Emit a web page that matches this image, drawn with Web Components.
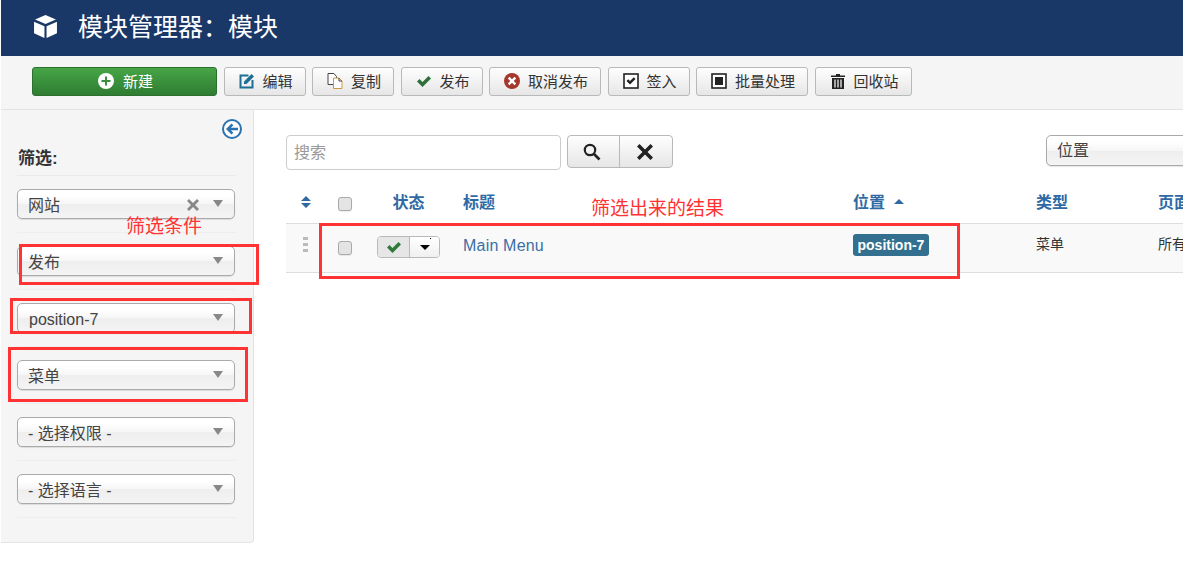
<!DOCTYPE html>
<html lang="zh-CN">

<head>
    <meta charset="UTF-8">
    <title>模块管理器:模块</title>
    <style>
        html, body {
            margin: 0;
            height: 100%;
            background: #fff;
            overflow: hidden;
        }

        body {
            position: relative;
            padding-left: 1px;
            box-sizing: border-box;
            font: 16px "Liberation Sans", "Noto Sans CJK SC", sans-serif;
            color: #333;
        }

        .content {
            display: flex;
            align-items: flex-start;
        }
    </style>
</head>

<body>
    <title-bar>模块管理器&#xFF1A;模块</title-bar>

    <tool-bar>
        <tool-button kind="new" icon="plus">新建</tool-button>
        <tool-button icon="edit">编辑</tool-button>
        <tool-button icon="copy">复制</tool-button>
        <tool-button icon="check">发布</tool-button>
        <tool-button icon="cancel">取消发布</tool-button>
        <tool-button icon="checkin">签入</tool-button>
        <tool-button icon="batch">批量处理</tool-button>
        <tool-button icon="trash">回收站</tool-button>
    </tool-bar>

    <div class="content">
        <filter-sidebar>
            <filter-select clearable>网站</filter-select>
            <filter-select>发布</filter-select>
            <filter-select latin>position-7</filter-select>
            <filter-select>菜单</filter-select>
            <filter-select>- 选择权限 -</filter-select>
            <filter-select>- 选择语言 -</filter-select>
        </filter-sidebar>
        <module-list></module-list>
    </div>

    <!-- 红色标注 -->
    <note-box x="19" y="244" w="240" h="41"></note-box>
    <note-box x="10" y="298" w="242" h="36"></note-box>
    <note-box x="8" y="347" w="240" h="55"></note-box>
    <note-box x="319" y="223" w="641" h="56"></note-box>
    <note-text x="126" y="215">筛选条件</note-text>
    <note-text x="591" y="197">筛选出来的结果</note-text>

    <script>
        const ICONS = {
            plus: '<svg width="16" height="16" viewBox="0 0 16 16"><circle cx="8" cy="8" r="8" fill="#fff"/><path d="M7 3.500h2V7h3.500v2H9v3.500H7V9H3.500V7H7z" fill="#3a8f3c"/></svg>',
            edit: '<svg width="16" height="16" viewBox="0 0 16 16"><path d="M9.500 2.500H1.500v12h12V7" fill="none" stroke="#1f6f94" stroke-width="2"/><path d="M5 8.500 12.500 1 15 3.500 7.500 11H5z" fill="#1f6f94"/></svg>',
            copy: '<svg width="16" height="16" viewBox="0 0 16 16"><path d="M1 .5h6l2.500 3v8H1z" fill="#fff" stroke="#444"/><path d="M6.500 5h5.500l3 3v7.500H6.500z" fill="#fff" stroke="#c79a3c"/><path d="M12 5v3h3" fill="none" stroke="#444"/></svg>',
            check: '<svg width="16" height="16" viewBox="0 0 16 16"><path d="M1 8.500 3.500 6l3 3L12.500 3 15 5.500 6.500 14z" fill="#2f6f3a"/></svg>',
            cancel: '<svg width="16" height="16" viewBox="0 0 16 16"><circle cx="8" cy="8" r="8" fill="#a5372c"/><path d="M5.500 3.800 8 6.300l2.500-2.500 1.700 1.700L9.700 8l2.500 2.500-1.700 1.700L8 9.700l-2.500 2.500-1.700-1.700L6.300 8 3.800 5.500z" fill="#fff"/></svg>',
            checkin: '<svg width="16" height="16" viewBox="0 0 16 16"><rect x="1" y="1" width="14" height="14" fill="#fff" stroke="#222" stroke-width="1.600"/><path d="M3.500 8 5.200 6.300 7 8l3.800-3.800 1.700 1.700L7 11.400z" fill="#222"/></svg>',
            batch: '<svg width="16" height="16" viewBox="0 0 16 16"><rect x="1" y="1" width="14" height="14" fill="#fff" stroke="#222" stroke-width="1.600"/><rect x="4" y="4" width="8" height="8" fill="#222"/></svg>',
            trash: '<svg width="16" height="16" viewBox="0 0 16 16"><path d="M1 2.500h5V1h4v1.500h5V4H1zM2 5h12v11H2z" fill="#222"/><path d="M5 6.500v8M8 6.500v8M11 6.500v8" stroke="#fff" stroke-width="1.200"/></svg>'
        };

        class TitleBar extends HTMLElement {
            constructor() {
                super();
                this.attachShadow({ mode: 'open' }).innerHTML = `
                    <style>
                        :host {
                            display: flex;
                            align-items: center;
                            height: 56px;
                            padding-left: 32px;
                            gap: 20px;
                            background: #1a3867;
                            color: #fff;
                            font-size: 25px;
                        }
                        svg { display: block; margin-top: -3px; }
                        span { margin-top: -6px; }
                    </style>
                    <svg width="25" height="25" viewBox="0 0 24 24" fill="#fff">
                        <path d="M12 1 22 5.200 12 9.500 2 5.200z"/>
                        <path d="M1 7.500 11 11.700V23L1 18.500z"/>
                        <path d="M23 7.500 13 11.700V23l10-4.500z"/>
                    </svg>
                    <span><slot></slot></span>`;
            }
        }

        class ToolBar extends HTMLElement {
            constructor() {
                super();
                this.attachShadow({ mode: 'open' }).innerHTML = `
                    <style>
                        :host {
                            display: flex;
                            gap: 6.5px;
                            height: 54px;
                            box-sizing: border-box;
                            padding: 11px 0 0 31px;
                            background: #f5f5f5;
                            border-bottom: 1px solid #e3e3e3;
                        }
                    </style>
                    <slot></slot>`;
            }
        }

        class ToolButton extends HTMLElement {
            constructor() {
                super();
                this.attachShadow({ mode: 'open' }).innerHTML = `
                    <style>
                        :host {
                            display: flex;
                            align-items: center;
                            justify-content: center;
                            gap: 8px;
                            height: 29px;
                            box-sizing: border-box;
                            padding: 0 12px 0 14px;
                            border: 1px solid #b9b9b9;
                            border-radius: 3px;
                            background: linear-gradient(#fefefe, #e6e6e6);
                            color: #333;
                            font-size: 15px;
                        }
                        :host([kind="new"]) {
                            width: 185px;
                            gap: 9px;
                            border-color: #2d6f2e;
                            background: linear-gradient(#46a546, #2f7d32);
                            color: #fff;
                        }
                        svg { display: block; margin-top: -1px; }
                        span { margin-top: -3px; }
                    </style>
                    ${ICONS[this.getAttribute('icon')]}
                    <span><slot></slot></span>`;
            }
        }

        class FilterSidebar extends HTMLElement {
            constructor() {
                super();
                this.attachShadow({ mode: 'open' }).innerHTML = `
                    <style>
                        :host {
                            display: block;
                            flex: none;
                            width: 253px;
                            height: 433px;
                            box-sizing: border-box;
                            padding: 8px 17px 0 16px;
                            background: #f5f5f5;
                            border-right: 1px solid #e3e3e3;
                            border-bottom: 1px solid #e3e3e3;
                            border-bottom-right-radius: 4px;
                        }
                        .back { display: flex; justify-content: flex-end; margin-right: -7px; }
                        .back svg { display: block; }
                        h4 {
                            margin: 7px 0 0 1px;
                            height: 28px;
                            font-size: 17px;
                            line-height: 24px;
                            font-weight: bold;
                            color: #333;
                        }
                        .list { border-top: 1px solid #eaeaea; padding-top: 13px; }
                    </style>
                    <div class="back">
                        <svg width="22" height="22" viewBox="0 0 22 22">
                            <circle cx="11" cy="11" r="9" fill="#fff" stroke="#2a72b0" stroke-width="2"/>
                            <path d="M10.500 5.500 5 11l5.500 5.500 1.800-1.800-2.400-2.400H17V9.700H9.900l2.400-2.400z" fill="#2a72b0"/>
                        </svg>
                    </div>
                    <h4>筛选:</h4>
                    <div class="list"><slot></slot></div>`;
            }
        }

        class FilterSelect extends HTMLElement {
            constructor() {
                super();
                this.attachShadow({ mode: 'open' }).innerHTML = `
                    <style>
                        :host {
                            display: block;
                            padding-bottom: 13px;
                            margin-bottom: 13px;
                            border-bottom: 1px solid #eeeeee;
                        }
                        .box {
                            display: flex;
                            align-items: center;
                            width: 218px;
                            height: 30px;
                            box-sizing: border-box;
                            padding: 0 11px 0 10px;
                            border: 1px solid #aaa;
                            border-radius: 5px;
                            background: linear-gradient(#fff 20%, #f6f6f6 50%, #eee 52%, #f4f4f4 100%);
                            box-shadow: 0 1px 1px rgba(0, 0, 0, .1);
                            color: #444;
                            font-size: 16px;
                        }
                        .label { flex: 1; }
                        :host([latin]) .label { margin: 3px 0 0 1px; }
                        .clear { margin-right: 14px; display: block; margin-top: 2px; }
                        .arrow {
                            width: 0;
                            height: 0;
                            margin-top: -2px;
                            border: 5px solid transparent;
                            border-top: 7px solid #888;
                            border-bottom: 0;
                        }
                    </style>
                    <div class="box">
                        <span class="label"><slot></slot></span>
                        ${this.hasAttribute('clearable') ? '<svg class="clear" width="12" height="12" viewBox="0 0 12 12"><path d="M2 0 6 4l4-4 2 2-4 4 4 4-2 2-4-4-4 4-2-2 4-4-4-4z" fill="#888"/></svg>' : ''}
                        <span class="arrow"></span>
                    </div>`;
            }
        }

        class ModuleList extends HTMLElement {
            constructor() {
                super();
                this.attachShadow({ mode: 'open' }).innerHTML = `
                    <style>
                        :host {
                            display: block;
                            flex: 1;
                            min-width: 0;
                            padding: 25px 0 0 32px;
                            overflow: hidden;
                        }
                        .tools { display: flex; align-items: flex-start; }
                        .search {
                            flex: none;
                            width: 275px;
                            height: 35px;
                            box-sizing: border-box;
                            padding: 0 7px;
                            border: 1px solid #ccc;
                            border-radius: 4px;
                            color: #999;
                            line-height: 33px;
                            font-size: 16px;
                        }
                        .btns {
                            flex: none;
                            display: flex;
                            margin-left: 6px;
                            height: 33px;
                            box-sizing: border-box;
                            border: 1px solid #b9b9b9;
                            border-radius: 4px;
                            background: linear-gradient(#fefefe, #e6e6e6);
                        }
                        .btns span { display: flex; align-items: center; justify-content: center; width: 51px; box-sizing: border-box; padding-right: 3px; }
                        .btns span + span { width: 53px; border-left: 1px solid #b9b9b9; }
                        .pos {
                            flex: none;
                            width: 200px;
                            height: 31px;
                            margin-left: 373px;
                            box-sizing: border-box;
                            padding-left: 10px;
                            border: 1px solid #aaa;
                            border-radius: 5px;
                            background: linear-gradient(#fff 20%, #f6f6f6 50%, #eee 52%, #f4f4f4 100%);
                            box-shadow: 0 1px 1px rgba(0, 0, 0, .1);
                            color: #444;
                            line-height: 29px;
                        }
                        .row {
                            display: grid;
                            grid-template-columns: 39px 40px 87px 401px 183px 122px 120px;
                            align-items: start;
                            width: 992px;
                        }
                        .head {
                            margin-top: 18px;
                            height: 35px;
                            border-bottom: 1px solid #ddd;
                            color: #2f6aa5;
                            font-weight: bold;
                            line-height: 20px;
                        }
                        .head > div { margin-top: 5px; }
                        .head .sort { margin-top: 8px; }
                        .head .check { margin-top: 9px; }
                        .body {
                            height: 48px;
                            background: #f9f9f9;
                            border-bottom: 1px solid #ddd;
                            line-height: 20px;
                        }
                        .center { display: flex; justify-content: center; }
                        .title { padding-left: 11px; }
                        .link { margin-top: 12px; color: #3b6fa6; letter-spacing: .2px; }
                        .cell { margin-top: 10px; font-size: 14px; color: #333; }
                        .box {
                            width: 14px;
                            height: 14px;
                            box-sizing: border-box;
                            border: 1px solid #aaa;
                            border-radius: 3px;
                            background: #e4e4e4;
                            box-shadow: 0 1px 1px rgba(0, 0, 0, .08);
                        }
                        .body .check { margin-top: 17px; }
                        .drag {
                            width: 5px;
                            height: 15px;
                            margin-top: 13px;
                            background: repeating-linear-gradient(#bbb 0 3px, transparent 3px 6px);
                        }
                        .status-cell { margin-top: 12px; }
                        .status {
                            position: relative;
                            display: flex;
                            width: 63px;
                            height: 22px;
                            box-sizing: border-box;
                            border: 1px solid #b9b9b9;
                            border-radius: 4px;
                            overflow: hidden;
                        }
                        .status span { display: flex; align-items: center; justify-content: center; }
                        .status .on { width: 31px; background: #e6e6e6; border-right: 1px solid #b9b9b9; }
                        .status .more { flex: 1; background: linear-gradient(#fff, #f0f0f0); }
                        .caret { width: 0; height: 0; border: 5px solid transparent; border-top: 5px solid #000; border-bottom: 0; }
                        .dot { position: absolute; left: 52px; top: 1px; width: 1px; height: 1px; background: #000; }
                        .badge-cell { margin-top: 10px; }
                        .badge {
                            display: inline-block;
                            height: 22px;
                            box-sizing: border-box;
                            padding: 0 4.500px;
                            border-radius: 3px;
                            background: #33708f;
                            color: #fff;
                            font-size: 14px;
                            font-weight: bold;
                            line-height: 22px;
                            vertical-align: top;
                        }
                        .up {
                            display: inline-block;
                            width: 0;
                            height: 0;
                            margin-left: 9px;
                            vertical-align: 4px;
                            border: 5px solid transparent;
                            border-bottom: 5px solid #2f6aa5;
                            border-top: 0;
                        }
                        svg { display: block; }
                    </style>
                    <div class="tools">
                        <div class="search">搜索</div>
                        <div class="btns">
                            <span><svg width="18" height="18" viewBox="0 0 18 18"><circle cx="7" cy="7" r="5.200" fill="none" stroke="#222" stroke-width="2.200"/><path d="m11 11 5.500 5.500" stroke="#222" stroke-width="2.600"/></svg></span>
                            <span><svg width="18" height="18" viewBox="0 0 18 18"><path d="M3.500 1 9 6.500 14.500 1 17 3.500 11.500 9l5.500 5.500-2.500 2.500L9 11.500 3.500 17 1 14.500 6.500 9 1 3.500z" fill="#222"/></svg></span>
                        </div>
                        <div class="pos">位置</div>
                    </div>
                    <div class="row head">
                        <div class="center sort"><svg width="10" height="12" viewBox="0 0 10 12" fill="#2f6aa5"><path d="M5 0 10 5H0zM0 7h10l-5 5z"/></svg></div>
                        <div class="center check"><div class="box"></div></div>
                        <div class="center">状态</div>
                        <div class="title">标题</div>
                        <div>位置<i class="up"></i></div>
                        <div>类型</div>
                        <div>页面</div>
                    </div>
                    <div class="row body">
                        <div class="center"><div class="drag"></div></div>
                        <div class="center check"><div class="box"></div></div>
                        <div class="center status-cell">
                            <div class="status">
                                <span class="on"><svg width="16" height="16" viewBox="0 0 16 16"><path d="M1 8.500 3.500 6l3 3L12.500 3 15 5.500 6.500 14z" fill="#2f7a3a"/></svg></span>
                                <span class="more"><i class="caret"></i></span>
                                <i class="dot"></i>
                            </div>
                        </div>
                        <div class="title link">Main Menu</div>
                        <div class="badge-cell"><span class="badge">position-7</span></div>
                        <div class="cell">菜单</div>
                        <div class="cell">所有</div>
                    </div>`;
            }
        }

        class NoteBox extends HTMLElement {
            constructor() {
                super();
                const a = n => this.getAttribute(n);
                this.attachShadow({ mode: 'open' }).innerHTML = `
                    <style>
                        :host {
                            position: absolute;
                            left: ${a('x')}px;
                            top: ${a('y')}px;
                            width: ${a('w')}px;
                            height: ${a('h')}px;
                            box-sizing: border-box;
                            border: 3px solid #f33;
                        }
                    </style>`;
            }
        }

        class NoteText extends HTMLElement {
            constructor() {
                super();
                const a = n => this.getAttribute(n);
                this.attachShadow({ mode: 'open' }).innerHTML = `
                    <style>
                        :host {
                            position: absolute;
                            left: ${a('x')}px;
                            top: ${a('y')}px;
                            color: #f33;
                            font-size: 19px;
                            line-height: 24px;
                        }
                    </style>
                    <slot></slot>`;
            }
        }

        customElements.define('title-bar', TitleBar);
        customElements.define('tool-bar', ToolBar);
        customElements.define('tool-button', ToolButton);
        customElements.define('filter-sidebar', FilterSidebar);
        customElements.define('filter-select', FilterSelect);
        customElements.define('module-list', ModuleList);
        customElements.define('note-box', NoteBox);
        customElements.define('note-text', NoteText);
    </script>
</body>

</html>
